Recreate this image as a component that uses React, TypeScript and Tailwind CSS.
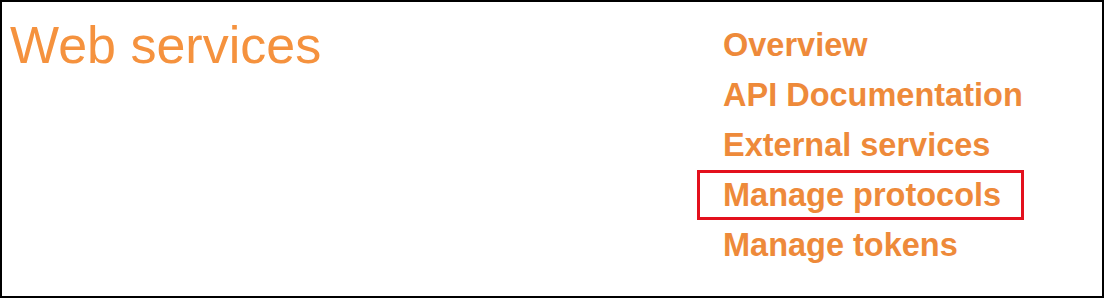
export default function App() {
    const links = ["Overview", "API Documentation", "External services", "Manage protocols", "Manage tokens"];

    return (
        <div className="w-[1104px] h-[298px] box-border border-2 border-black bg-white flex font-['Liberation_Sans',Arial,sans-serif]">
            {/* Title */}
            <h1 className="ml-[8px] mt-[17px] text-[52px] leading-none font-normal text-[#f5923e]">
                Web services
            </h1>

            {/* Links */}
            <ul className="ml-auto mr-[78px] mt-[18px] w-[327px]">
                {links.map((link) => (
                    <li
                        key={link}
                        className={`h-[50px] pl-[26px] text-[32.5px] leading-[50px] font-bold text-[#ee8a3a] ${link === "Manage protocols" ? "shadow-[inset_0_0_0_3px_#e3101d]" : ""}`}
                    >
                        {link}
                    </li>
                ))}
            </ul>
        </div>
    );
}
